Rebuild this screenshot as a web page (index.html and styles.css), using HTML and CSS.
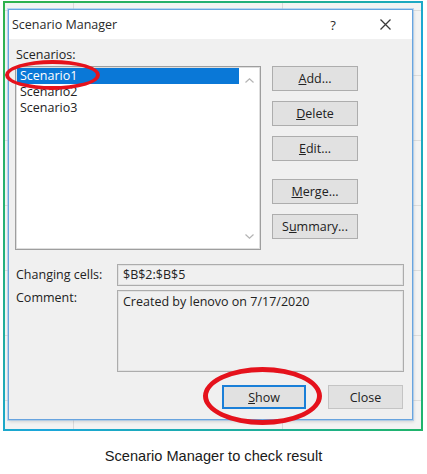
FILE: index.html
```html
<!DOCTYPE html>
<html lang="en">
<head>
<meta charset="utf-8">
<title>Scenario Manager</title>
<link rel="stylesheet" href="styles.css">
</head>
<body>
<div class="page">
  <div class="frame">
    <div class="dialog">
      <div class="titlebar">
        <span class="title">Scenario Manager</span>
        <span class="help">?</span>
        <span class="close-x">
          <svg width="11" height="11" viewBox="0 0 11 11"><path d="M0.5 0.5 L10.5 10.5 M10.5 0.5 L0.5 10.5" stroke="#3a3a3a" stroke-width="1.3" fill="none"/></svg>
        </span>
      </div>
      <div class="body">
        <div class="top-row">
          <div class="list-col">
            <div class="label">Scenarios:</div>
            <div class="listbox">
              <div class="items">
                <div class="item selected">Scenario1</div>
                <div class="item">Scenario2</div>
                <div class="item">Scenario3</div>
              </div>
              <div class="scrollbar">
                <svg width="9" height="5" viewBox="0 0 9 5"><path d="M0.5 4.5 L4.5 0.8 L8.5 4.5" stroke="#b4b4b4" stroke-width="1.2" fill="none"/></svg>
                <svg width="9" height="5" viewBox="0 0 9 5"><path d="M0.5 0.5 L4.5 4.2 L8.5 0.5" stroke="#b4b4b4" stroke-width="1.2" fill="none"/></svg>
              </div>
            </div>
          </div>
          <div class="btn-col">
            <button class="btn"><u>A</u>dd...</button>
            <button class="btn"><u>D</u>elete</button>
            <button class="btn"><u>E</u>dit...</button>
            <button class="btn btn-merge"><u>M</u>erge...</button>
            <button class="btn">S<u>u</u>mmary...</button>
          </div>
        </div>
        <div class="field-row">
          <span class="field-label">Changing cells:</span>
          <div class="field">$B$2:$B$5</div>
        </div>
        <div class="field-row comment-row">
          <span class="field-label">Comment:</span>
          <div class="field comment">Created by lenovo on 7/17/2020</div>
        </div>
        <div class="bottom-row">
          <button class="btn btn-show"><u>S</u>how</button>
          <button class="btn btn-close">Close</button>
        </div>
      </div>
    </div>
  </div>
  <p class="caption">Scenario Manager to check result</p>
  <div class="mark mark-list"></div>
  <div class="mark mark-show"></div>
</div>
</body>
</html>
```
FILE: styles.css
```css
* { box-sizing: border-box; }

body {
  margin: 0;
  background: #ffffff;
  font-family: "Open Sans", "Noto Sans", sans-serif;
  color: #222222;
}

.page {
  position: relative;
  width: 427px;
  height: 474px;
  padding-top: 1px;
}

.frame {
  margin-left: 3px;
  width: 420px;
  height: 430px;
  border: 2px solid #1aa0e0;
  border-image: linear-gradient(135deg, #2fb24c 0%, #22b07c 30%, #1ba6dc 55%, #20b46a 100%) 1;
  padding: 6px 0 0 3px;
  background-color: #f3f3f3;
  background-image:
    linear-gradient(to right, transparent 68px, #dadada 68px, #dadada 69px, transparent 69px, transparent 277px, #dadada 277px, #dadada 278px, transparent 278px),
    repeating-linear-gradient(to bottom, transparent 0, transparent 7px, #dcdcdc 7px, #dcdcdc 8px, transparent 8px, transparent 65px);
}

.dialog {
  width: 405px;
  height: 411px;
  border: 1px solid #68a4df;
  box-shadow: 0 0 0 1px rgba(140, 190, 236, 0.55), 1px 2px 3px rgba(0, 0, 0, 0.12);
  background: #f0f0f0;
  display: flex;
  flex-direction: column;
  font-size: 12.5px;
}

.titlebar {
  height: 29px;
  background: #ffffff;
  display: flex;
  align-items: center;
  padding: 0 17px 0 3px;
}

.title {
  font-size: 12.5px;
  color: #2a2a2a;
}

.help {
  margin-left: auto;
  width: 20px;
  text-align: center;
  font-size: 13px;
  color: #2a2a2a;
}

.close-x {
  margin-left: 32px;
  width: 20px;
  height: 11px;
  display: flex;
  justify-content: center;
}

.body {
  flex: 1;
  padding: 8px 8px 0 6px;
}

.top-row {
  display: flex;
}

.list-col {
  width: 246px;
}

.label {
  height: 16px;
  line-height: 16px;
  padding-left: 1px;
  margin-bottom: 3px;
}

.listbox {
  width: 246px;
  height: 184px;
  border: 1px solid #9e9e9e;
  box-shadow: inset 0 0 0 1px #dedede;
  background: #ffffff;
  padding: 1px;
  display: flex;
}

.items {
  width: 222px;
}

.item {
  height: 16px;
  line-height: 16px;
  padding-left: 3px;
  color: #222222;
}

.item.selected {
  background: #0a78d7;
  color: #ffffff;
}

.scrollbar {
  width: 20px;
  display: flex;
  flex-direction: column;
  justify-content: space-between;
  align-items: center;
  padding: 10px 0 9px;
}

.scrollbar svg {
  display: block;
}

.btn-col {
  margin-left: 11px;
  padding-top: 19px;
  width: 86px;
  display: flex;
  flex-direction: column;
}

.btn {
  height: 25px;
  border: 1px solid #adadad;
  background: #e1e1e1;
  font-family: inherit;
  font-size: 12.5px;
  color: #222222;
  padding: 0;
  margin: 0 0 10px 0;
  text-align: center;
}

.btn-merge {
  margin-top: 8px;
}

.field-row {
  display: flex;
  margin-top: 14px;
}

.field-label {
  width: 102px;
  padding-left: 1px;
  line-height: 22px;
}

.field {
  width: 287px;
  height: 22px;
  border: 1px solid #acacac;
  box-shadow: inset 0 0 0 1px #e2e2e2;
  padding-left: 5px;
  line-height: 20px;
  background: #f0f0f0;
}

.comment-row {
  margin-top: 4px;
}

.comment-row .field-label {
  line-height: 16px;
}

.field.comment {
  height: 82px;
  padding-top: 3px;
  line-height: 16px;
}

.bottom-row {
  display: flex;
  margin-top: 13px;
  margin-left: 207px;
}

.btn-show {
  width: 84px;
  height: 24px;
  border: 2px solid #1a7fd8;
  margin: 0;
}

.btn-close {
  width: 75px;
  height: 24px;
  margin: 0 0 0 22px;
  border-color: #c4c4c4;
}

.caption {
  margin: 17px 0 0 0;
  text-align: center;
  font-family: "Liberation Sans", Arial, sans-serif;
  font-size: 14.6px;
  line-height: 16px;
  color: #1a1a1a;
}

.mark {
  position: absolute;
  border: 4px solid #e5121c;
  border-radius: 50%;
}

.mark-list {
  left: 5px;
  top: 60px;
  width: 95px;
  height: 30px;
}

.mark-show {
  left: 203px;
  top: 367px;
  width: 119px;
  height: 58px;
  border-width: 5px;
}
```
